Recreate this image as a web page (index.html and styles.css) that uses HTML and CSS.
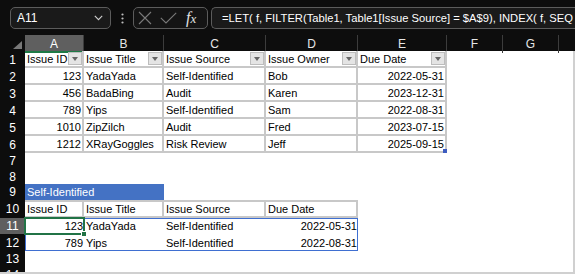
FILE: index.html
```html
<!DOCTYPE html>
<html>
<head>
<meta charset="utf-8">
<link rel="stylesheet" href="styles.css">
</head>
<body>
<div class="app">
  <div class="fbar">
    <div class="namebox"><span>A11</span><svg class="chev" width="9" height="6" viewBox="0 0 9 6"><path d="M0.8 0.8 L4.5 4.6 L8.2 0.8" fill="none" stroke="#cfcfcf" stroke-width="1.1"/></svg></div>
    <div class="dots"><svg width="3" height="11" viewBox="0 0 3 11"><circle cx="1.5" cy="1.5" r="1.1"/><circle cx="1.5" cy="5.5" r="1.1"/><circle cx="1.5" cy="9.5" r="1.1"/></svg></div>
    <div class="fxg">
      <svg class="ix" width="14" height="14" viewBox="0 0 14 14"><path d="M1 1 L13 13 M13 1 L1 13" stroke="#7a7a7a" stroke-width="1.1" fill="none"/></svg>
      <svg class="ic" width="17" height="12" viewBox="0 0 17 12"><path d="M0.8 5.8 L6 11 L16.2 0.8" stroke="#7a7a7a" stroke-width="1.1" fill="none"/></svg>
      <span class="fx"><i>f</i><i class="x">x</i></span>
    </div>
    <div class="formula">=LET( f, FILTER(Table1, Table1[Issue Source] = $A$9), INDEX( f, SEQ</div>
  </div>

  <div class="colhdr">
    <div class="corner"><svg width="9" height="8" viewBox="0 0 9 8"><polygon points="9,0 9,8 0,8" fill="#787878"/></svg></div>
    <div class="sel">A</div>
    <div>B</div>
    <div>C</div>
    <div>D</div>
    <div>E</div>
    <div>F</div>
    <div>G</div>
    <div class="last"></div>
  </div>

  <div class="grid">
    <div class="row h17">
      <div class="rh">1</div>
      <div class="c t th"><span>Issue ID</span><span class="flt"></span></div>
      <div class="c t th"><span>Issue Title</span><span class="flt"></span></div>
      <div class="c t th"><span>Issue Source</span><span class="flt"></span></div>
      <div class="c t th"><span>Issue Owner</span><span class="flt"></span></div>
      <div class="c t th"><span>Due Date</span><span class="flt"></span></div>
    </div>
    <div class="row h17">
      <div class="rh">2</div>
      <div class="c t num">123</div>
      <div class="c t">YadaYada</div>
      <div class="c t">Self-Identified</div>
      <div class="c t">Bob</div>
      <div class="c t num">2022-05-31</div>
    </div>
    <div class="row h17">
      <div class="rh">3</div>
      <div class="c t num">456</div>
      <div class="c t">BadaBing</div>
      <div class="c t">Audit</div>
      <div class="c t">Karen</div>
      <div class="c t num">2023-12-31</div>
    </div>
    <div class="row h17">
      <div class="rh">4</div>
      <div class="c t num">789</div>
      <div class="c t">Yips</div>
      <div class="c t">Self-Identified</div>
      <div class="c t">Sam</div>
      <div class="c t num">2022-08-31</div>
    </div>
    <div class="row h17">
      <div class="rh">5</div>
      <div class="c t num">1010</div>
      <div class="c t">ZipZilch</div>
      <div class="c t">Audit</div>
      <div class="c t">Fred</div>
      <div class="c t num">2023-07-15</div>
    </div>
    <div class="row h17">
      <div class="rh">6</div>
      <div class="c t num">1212</div>
      <div class="c t">XRayGoggles</div>
      <div class="c t">Risk Review</div>
      <div class="c t">Jeff</div>
      <div class="c t num corner-mark">2025-09-15</div>
    </div>
    <div class="row h16"><div class="rh">7</div></div>
    <div class="row h15"><div class="rh">8</div></div>
    <div class="row h16">
      <div class="rh">9</div>
      <div class="c blue">Self-Identified</div>
    </div>
    <div class="row h18">
      <div class="rh">10</div>
      <div class="c g">Issue ID</div>
      <div class="c g">Issue Title</div>
      <div class="c g">Issue Source</div>
      <div class="c g">Due Date</div>
    </div>
    <div class="row h16">
      <div class="rh rsel">11</div>
      <div class="c num active">123</div>
      <div class="c">YadaYada</div>
      <div class="c">Self-Identified</div>
      <div class="c num">2022-05-31</div>
    </div>
    <div class="row h17">
      <div class="rh">12</div>
      <div class="c num">789</div>
      <div class="c">Yips</div>
      <div class="c">Self-Identified</div>
      <div class="c num">2022-08-31</div>
    </div>
    <div class="row h16"><div class="rh">13</div></div>
    <div class="row h16"><div class="rh">14</div></div>
    <div class="spill"></div>
  </div>
</div>
</body>
</html>
```

FILE: styles.css
```css
html, body {
  margin: 0;
  padding: 0;
}
body {
  width: 575px;
  height: 274px;
  overflow: hidden;
  background: #ffffff;
  font-family: "Liberation Sans", Arial, sans-serif;
}
.app {
  width: 575px;
  height: 274px;
  overflow: hidden;
}

/* formula bar */
.fbar {
  display: flex;
  align-items: flex-start;
  height: 35px;
  box-sizing: border-box;
  padding: 7px 0 0 10px;
  background: #0d0d0d;
  overflow: hidden;
}
.namebox {
  width: 101px;
  height: 22px;
  flex: none;
  box-sizing: border-box;
  border: 1px solid #5c5c5c;
  border-radius: 5px;
  background: #1a1a1a;
  display: flex;
  align-items: center;
  padding: 0 7px 0 6px;
  color: #ffffff;
  font-size: 12px;
}
.namebox .chev {
  margin-left: auto;
}
.dots {
  width: 22px;
  height: 22px;
  flex: none;
  display: flex;
  align-items: center;
  justify-content: center;
  fill: #bdbdbd;
}
.fxg {
  width: 75px;
  height: 22px;
  flex: none;
  box-sizing: border-box;
  border: 1px solid #5c5c5c;
  border-radius: 5px;
  background: #141414;
  display: flex;
  align-items: center;
  padding-left: 4px;
}
.fxg .ic {
  margin-left: 8px;
}
.fx {
  margin-left: 9px;
  font-family: "Liberation Serif", "Times New Roman", serif;
  font-size: 16px;
  color: #e2e2e2;
  line-height: 1;
  letter-spacing: 0;
}
.fx .x {
  font-size: 13px;
}
.formula {
  flex: 1;
  min-width: 0;
  margin-left: 3px;
  height: 22px;
  box-sizing: border-box;
  border: 1px solid #5c5c5c;
  border-right: none;
  border-radius: 5px 0 0 5px;
  background: #1a1a1a;
  padding-left: 10px;
  color: #ffffff;
  font-size: 11.2px;
  line-height: 20px;
  white-space: nowrap;
  overflow: hidden;
}

/* column headers */
.colhdr {
  display: grid;
  grid-template-columns: 25px 59px 80px 102px 92px 89px 56px 56px 1fr;
  height: 16px;
  background: #0d0d0d;
  color: #e6e6e6;
  font-size: 12px;
}
.colhdr > div {
  box-sizing: border-box;
  border-right: 1px solid #3c3c3c;
  display: flex;
  align-items: center;
  justify-content: center;
}
.colhdr > .corner {
  border-right: none;
  align-items: flex-end;
  justify-content: flex-end;
  padding: 0 3px 4px 0;
}
.colhdr > .sel {
  background: #5f5f5f;
  color: #ffffff;
  border-bottom: 2px solid #1e7a46;
  padding-top: 2px;
}
.colhdr > .last {
  border-right: none;
}

/* cells */
.grid {
  position: relative;
  height: 223px;
  box-sizing: border-box;
  border-right: 2px solid #d0d0d0;
  border-bottom: 2px solid #d0d0d0;
  overflow: hidden;
}
.row {
  display: grid;
  grid-template-columns: 25px 59px 80px 102px 92px 89px 56px 56px 1fr;
  font-size: 11px;
  color: #000000;
}
.h15 { height: 15px; }
.h16 { height: 16px; }
.h17 { height: 17px; }
.h18 { height: 18px; }

.rh {
  grid-column: 1;
  background: #0d0d0d;
  color: #ffffff;
  font-size: 12px;
  display: flex;
  align-items: center;
  justify-content: center;
}
.rh.rsel {
  background: #5f5f5f;
}
.c {
  box-sizing: border-box;
  min-width: 0;
  display: flex;
  align-items: center;
  padding: 0 2px;
  white-space: nowrap;
  overflow: hidden;
}
.t {
  border-right: 2px solid #c8c8c8;
  border-bottom: 2px solid #c8c8c8;
}
.th {
  padding-right: 0;
}
.flt {
  margin-left: auto;
  flex: none;
  width: 14px;
  height: 13px;
  box-sizing: border-box;
  border: 1px solid #bdbdbd;
  background: #e4e4e4;
  display: flex;
  align-items: center;
  justify-content: center;
}
.flt::before {
  content: "";
  width: 0;
  height: 0;
  border-left: 3.5px solid transparent;
  border-right: 3.5px solid transparent;
  border-top: 4px solid #666666;
}
.num {
  justify-content: flex-end;
  padding-right: 1px;
}
.corner-mark {
  position: relative;
  overflow: visible;
}
.corner-mark::after {
  content: "";
  position: absolute;
  right: -2px;
  bottom: -2px;
  width: 4px;
  height: 4px;
  background: #3d5cc0;
}
.blue {
  grid-column: span 2;
  background: #4472c4;
  color: #ffffff;
}
.g {
  border-top: 2px solid #c8c8c8;
  border-right: 2px solid #c8c8c8;
  border-bottom: 2px solid #c8c8c8;
}
.active {
  position: relative;
  z-index: 3;
  overflow: visible;
  outline: 2px solid #217346;
  outline-offset: -1px;
}
.active::after {
  content: "";
  position: absolute;
  right: -3px;
  bottom: -3px;
  width: 4px;
  height: 4px;
  background: #217346;
  border: 1px solid #ffffff;
}
.spill {
  position: absolute;
  z-index: 1;
  left: 25px;
  top: 167px;
  width: 333px;
  height: 33px;
  box-sizing: border-box;
  border: 1px solid #3f6fd1;
  pointer-events: none;
}
```
